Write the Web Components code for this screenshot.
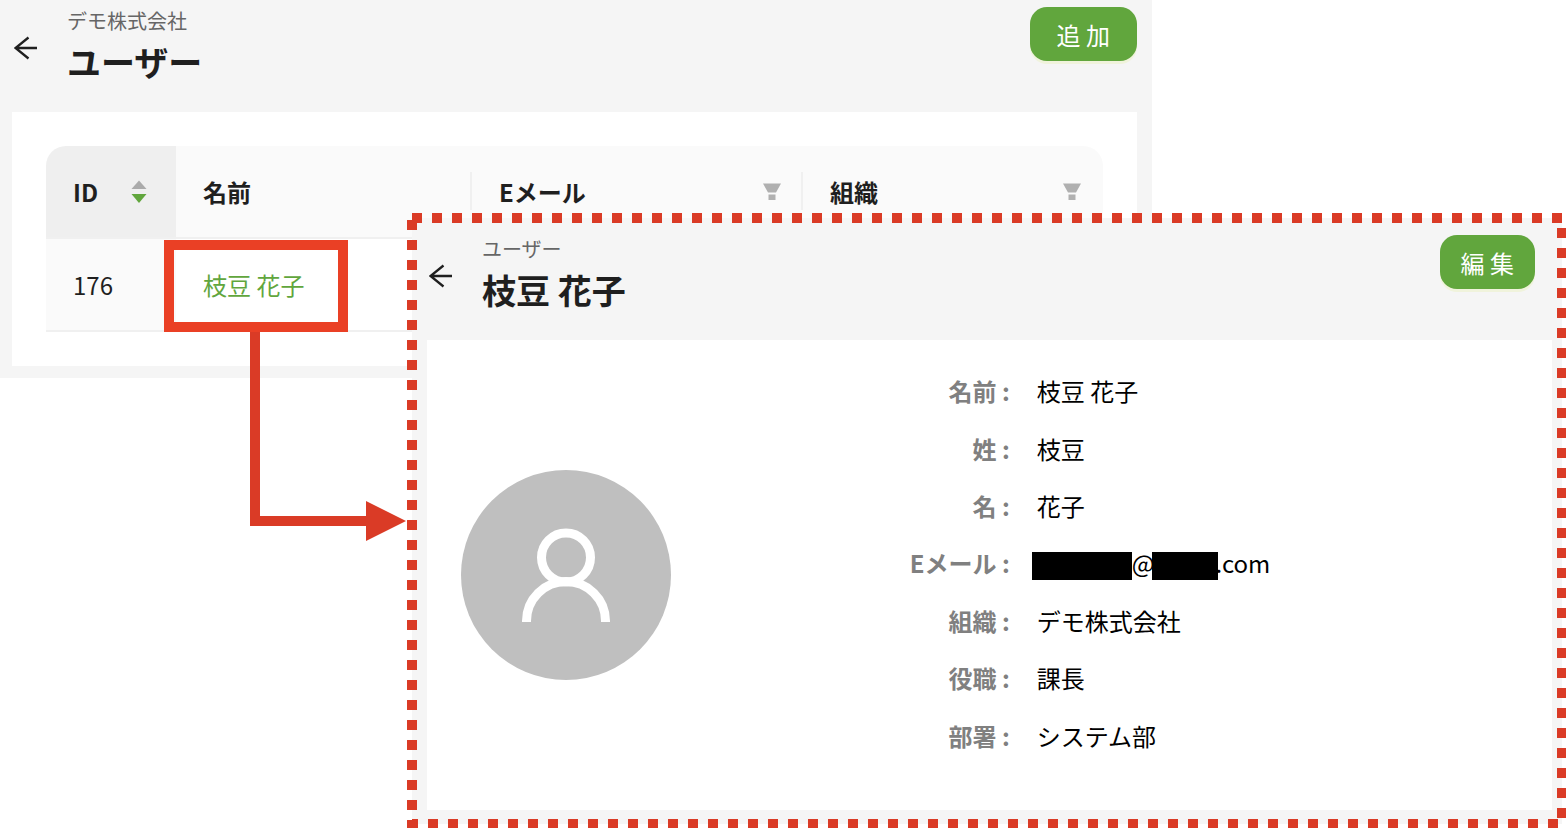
<!DOCTYPE html>
<html lang="ja">
<head>
<meta charset="utf-8">
<title>ユーザー</title>
<style>
    body {
        margin: 0;
        background: #fff;
        color: #1f1f1f;
        font-family: "Noto Sans CJK JP", sans-serif;
        font-size: 24px;
    }
</style>
</head>
<body>
<guide-page></guide-page>

<script>
const pageHeaderTemplate = document.createElement('template');
pageHeaderTemplate.innerHTML = `
    <style>
        :host {
            display: flex;
            align-items: center;
            padding: 7px 0 23px 14px;
        }
        .back {
            display: flex;
            padding: 0;
            border: 0;
            background: none;
            color: inherit;
        }
        .titles {
            flex: 1;
            margin-left: 29px;
        }
        .crumb {
            color: #666;
            font-size: 20px;
            line-height: 28px;
        }
        h1 {
            margin: 0;
            font-size: 34px;
            line-height: 54px;
            font-weight: 700;
        }
        ::slotted(green-button) {
            align-self: flex-start;
        }
    </style>
    <button class="back" type="button" aria-label="戻る">
        <svg width="24" height="24" viewBox="0 0 24 24" fill="none" stroke="currentColor" stroke-width="2.3">
            <path d="M23 12H1.5M14.5 1.500L1.5 12L14.5 22.500"/>
        </svg>
    </button>
    <div class="titles">
        <div class="crumb"><slot name="crumb"></slot></div>
        <h1><slot></slot></h1>
    </div>
    <slot name="action"></slot>
`;

class PageHeader extends HTMLElement {
    constructor() {
        super();
        this.attachShadow({ mode: 'open' });
        this.shadowRoot.appendChild(pageHeaderTemplate.content.cloneNode(true));
    }
}

const greenButtonTemplate = document.createElement('template');
greenButtonTemplate.innerHTML = `
    <style>
        :host {
            display: block;
        }
        button {
            display: block;
            height: 54px;
            padding: 0 var(--button-padding, 27px);
            border: 0;
            border-radius: 17px;
            background: #61a63d;
            box-shadow: 0 3px 0 #f0f3dc;
            color: #fff;
            font: inherit;
        }
    </style>
    <button type="button"><slot></slot></button>
`;

class GreenButton extends HTMLElement {
    constructor() {
        super();
        this.attachShadow({ mode: 'open' });
        this.shadowRoot.appendChild(greenButtonTemplate.content.cloneNode(true));
    }
}

const userTableTemplate = document.createElement('template');
userTableTemplate.innerHTML = `
    <style>
        :host {
            display: block;
        }
        table {
            width: 100%;
            table-layout: fixed;
            border-collapse: separate;
            border-spacing: 0;
        }
        .col-id { width: 130px; }
        .col-name { width: 296px; }
        .col-org { width: 300px; }
        th, td {
            box-sizing: border-box;
            height: 93px;
            padding: 0 21px 0 27px;
            border-bottom: 2px solid #f0f0f0;
            text-align: left;
        }
        th {
            position: relative;
            background: #fafafa;
            font-weight: 700;
        }
        th:first-child {
            border-top-left-radius: 20px;
            background: #efefef;
        }
        th:last-child {
            border-top-right-radius: 20px;
        }
        .divided::after {
            content: "";
            position: absolute;
            top: 26px;
            right: 0;
            width: 2px;
            height: 38px;
            background: #f0f0f0;
        }
        td:first-child {
            background: #fafafa;
        }
        .head {
            display: flex;
            align-items: center;
            justify-content: space-between;
        }
        .sort {
            margin-right: 8px;
        }
        a {
            color: #61a63d;
            text-decoration: none;
        }
    </style>
    <table>
        <colgroup>
            <col class="col-id"><col class="col-name"><col><col class="col-org">
        </colgroup>
        <thead>
            <tr>
                <th scope="col">
                    <div class="head">ID
                        <svg class="sort" width="16" height="24" viewBox="0 0 16 24">
                            <path d="M8 0.500L15.500 9H0.500z" fill="#aaa"/>
                            <path d="M0.500 14H15.500L8 23z" fill="#61a63d"/>
                        </svg>
                    </div>
                </th>
                <th scope="col" class="divided">名前</th>
                <th scope="col" class="divided">
                    <div class="head">Eメール
                        <svg width="20" height="18" viewBox="0 0 20 18" fill="#b0b0b0">
                            <path d="M1 0.500H19L14 9.500H6zM6.500 11.500H13.500V17H6.500z"/>
                        </svg>
                    </div>
                </th>
                <th scope="col">
                    <div class="head">組織
                        <svg width="20" height="18" viewBox="0 0 20 18" fill="#b0b0b0">
                            <path d="M1 0.500H19L14 9.500H6zM6.500 11.500H13.500V17H6.500z"/>
                        </svg>
                    </div>
                </th>
            </tr>
        </thead>
        <tbody>
            <tr>
                <td>176</td>
                <td><a href="#user">枝豆 花子</a></td>
                <td></td>
                <td></td>
            </tr>
        </tbody>
    </table>
`;

class UserTable extends HTMLElement {
    constructor() {
        super();
        this.attachShadow({ mode: 'open' });
        this.shadowRoot.appendChild(userTableTemplate.content.cloneNode(true));
    }
}

const userProfileTemplate = document.createElement('template');
userProfileTemplate.innerHTML = `
    <style>
        :host {
            display: grid;
            grid-template-columns: 210px 1fr;
            box-sizing: border-box;
            min-height: 470px;
            padding: 0 34px;
        }
        .avatar {
            align-self: center;
        }
        dl {
            display: grid;
            grid-template-columns: 40% 1fr;
            grid-auto-rows: 1fr;
            column-gap: 27px;
            align-items: center;
            margin: 22px 0 46px;
        }
        dt {
            color: #808080;
            font-weight: 700;
            text-align: right;
        }
        dd {
            margin: 0;
            color: #000;
        }
        .mail {
            display: flex;
            align-items: center;
            margin-left: -5px;
        }
        .mask {
            width: 66px;
            height: 28px;
            margin: 6px -2px 0 -3px;
            background: #000;
        }
        .mask:first-child {
            width: 100px;
            margin: 6px 0 0;
        }
    </style>
    <svg class="avatar" width="210" height="210" viewBox="0 0 210 210" fill="none" stroke="#fff" stroke-width="9">
        <circle cx="105" cy="105" r="105" fill="#bfbfbf" stroke="none"/>
        <circle cx="105" cy="87.500" r="24.500"/>
        <path d="M65.500 152V151A39.500 39.500 0 0 1 144.500 151V152"/>
    </svg>
    <dl>
        <dt>名前 :</dt><dd>枝豆 花子</dd>
        <dt>姓 :</dt><dd>枝豆</dd>
        <dt>名 :</dt><dd>花子</dd>
        <dt>Eメール :</dt><dd class="mail"><span class="mask"></span>@<span class="mask"></span>.com</dd>
        <dt>組織 :</dt><dd>デモ株式会社</dd>
        <dt>役職 :</dt><dd>課長</dd>
        <dt>部署 :</dt><dd>システム部</dd>
    </dl>
`;

class UserProfile extends HTMLElement {
    constructor() {
        super();
        this.attachShadow({ mode: 'open' });
        this.shadowRoot.appendChild(userProfileTemplate.content.cloneNode(true));
    }
}

// dotted callout border drawn over the edge of its content
const calloutFrameTemplate = document.createElement('template');
calloutFrameTemplate.innerHTML = `
    <style>
        :host {
            display: block;
            position: relative;
            padding: 5px 4px 4px 5px;
        }
        svg {
            position: absolute;
            inset: 0;
            width: 100%;
            height: 100%;
            pointer-events: none;
        }
    </style>
    <slot></slot>
    <svg stroke="#da3b26" stroke-width="10" stroke-dasharray="10">
        <line x1="5" y1="5" x2="100%" y2="5"/>
        <line x1="5" y1="7" x2="5" y2="100%"/>
        <line x1="100%" y1="15" x2="100%" y2="100%" transform="translate(-4 0)"/>
        <line x1="5" y1="100%" x2="100%" y2="100%" stroke-dashoffset="4" transform="translate(0 -4)"/>
    </svg>
`;

class CalloutFrame extends HTMLElement {
    constructor() {
        super();
        this.attachShadow({ mode: 'open' });
        this.shadowRoot.appendChild(calloutFrameTemplate.content.cloneNode(true));
    }
}

const guidePageTemplate = document.createElement('template');
guidePageTemplate.innerHTML = `
    <style>
        :host {
            display: grid;
            position: relative;
            align-items: start;
        }
        .list, callout-frame {
            grid-area: 1 / 1;
        }
        .list {
            margin-right: 414px;
            padding-bottom: 12px;
            background: #f5f5f5;
        }
        .list page-header {
            margin-right: 15px;
        }
        .list user-table {
            margin: 0 15px 0 12px;
            padding: 34px;
            background: #fff;
        }
        callout-frame {
            margin: 213px 0 0 407px;
        }
        .detail {
            padding: 10px 10px 14px 3px;
            background: #f5f5f5;
        }
        .detail page-header {
            margin-right: 17px;
            --button-padding: 21px;
        }
        .detail user-profile {
            margin-left: 12px;
            background: #fff;
        }
        .highlight {
            position: absolute;
            top: 240px;
            left: 164px;
            box-sizing: border-box;
            width: 184px;
            height: 92px;
            border: 10px solid #ea4025;
            pointer-events: none;
        }
        .arrow {
            position: absolute;
            top: 332px;
            left: 250px;
        }
    </style>
    <section class="list">
        <page-header>
            <span slot="crumb">デモ株式会社</span>
            ユーザー
            <green-button slot="action">追 加</green-button>
        </page-header>
        <user-table></user-table>
    </section>
    <callout-frame>
        <section class="detail" id="user">
            <page-header>
                <span slot="crumb">ユーザー</span>
                枝豆 花子
                <green-button slot="action">編 集</green-button>
            </page-header>
            <user-profile></user-profile>
        </section>
    </callout-frame>
    <div class="highlight"></div>
    <svg class="arrow" width="157" height="210" viewBox="0 0 157 210" fill="#da3b26">
        <path d="M0 0H10V184H116V169L156 189L116 209V194H0z"/>
    </svg>
`;

class GuidePage extends HTMLElement {
    constructor() {
        super();
        this.attachShadow({ mode: 'open' });
        this.shadowRoot.appendChild(guidePageTemplate.content.cloneNode(true));
    }
}

customElements.define('page-header', PageHeader);
customElements.define('green-button', GreenButton);
customElements.define('user-table', UserTable);
customElements.define('user-profile', UserProfile);
customElements.define('callout-frame', CalloutFrame);
customElements.define('guide-page', GuidePage);
</script>
</body>
</html>
